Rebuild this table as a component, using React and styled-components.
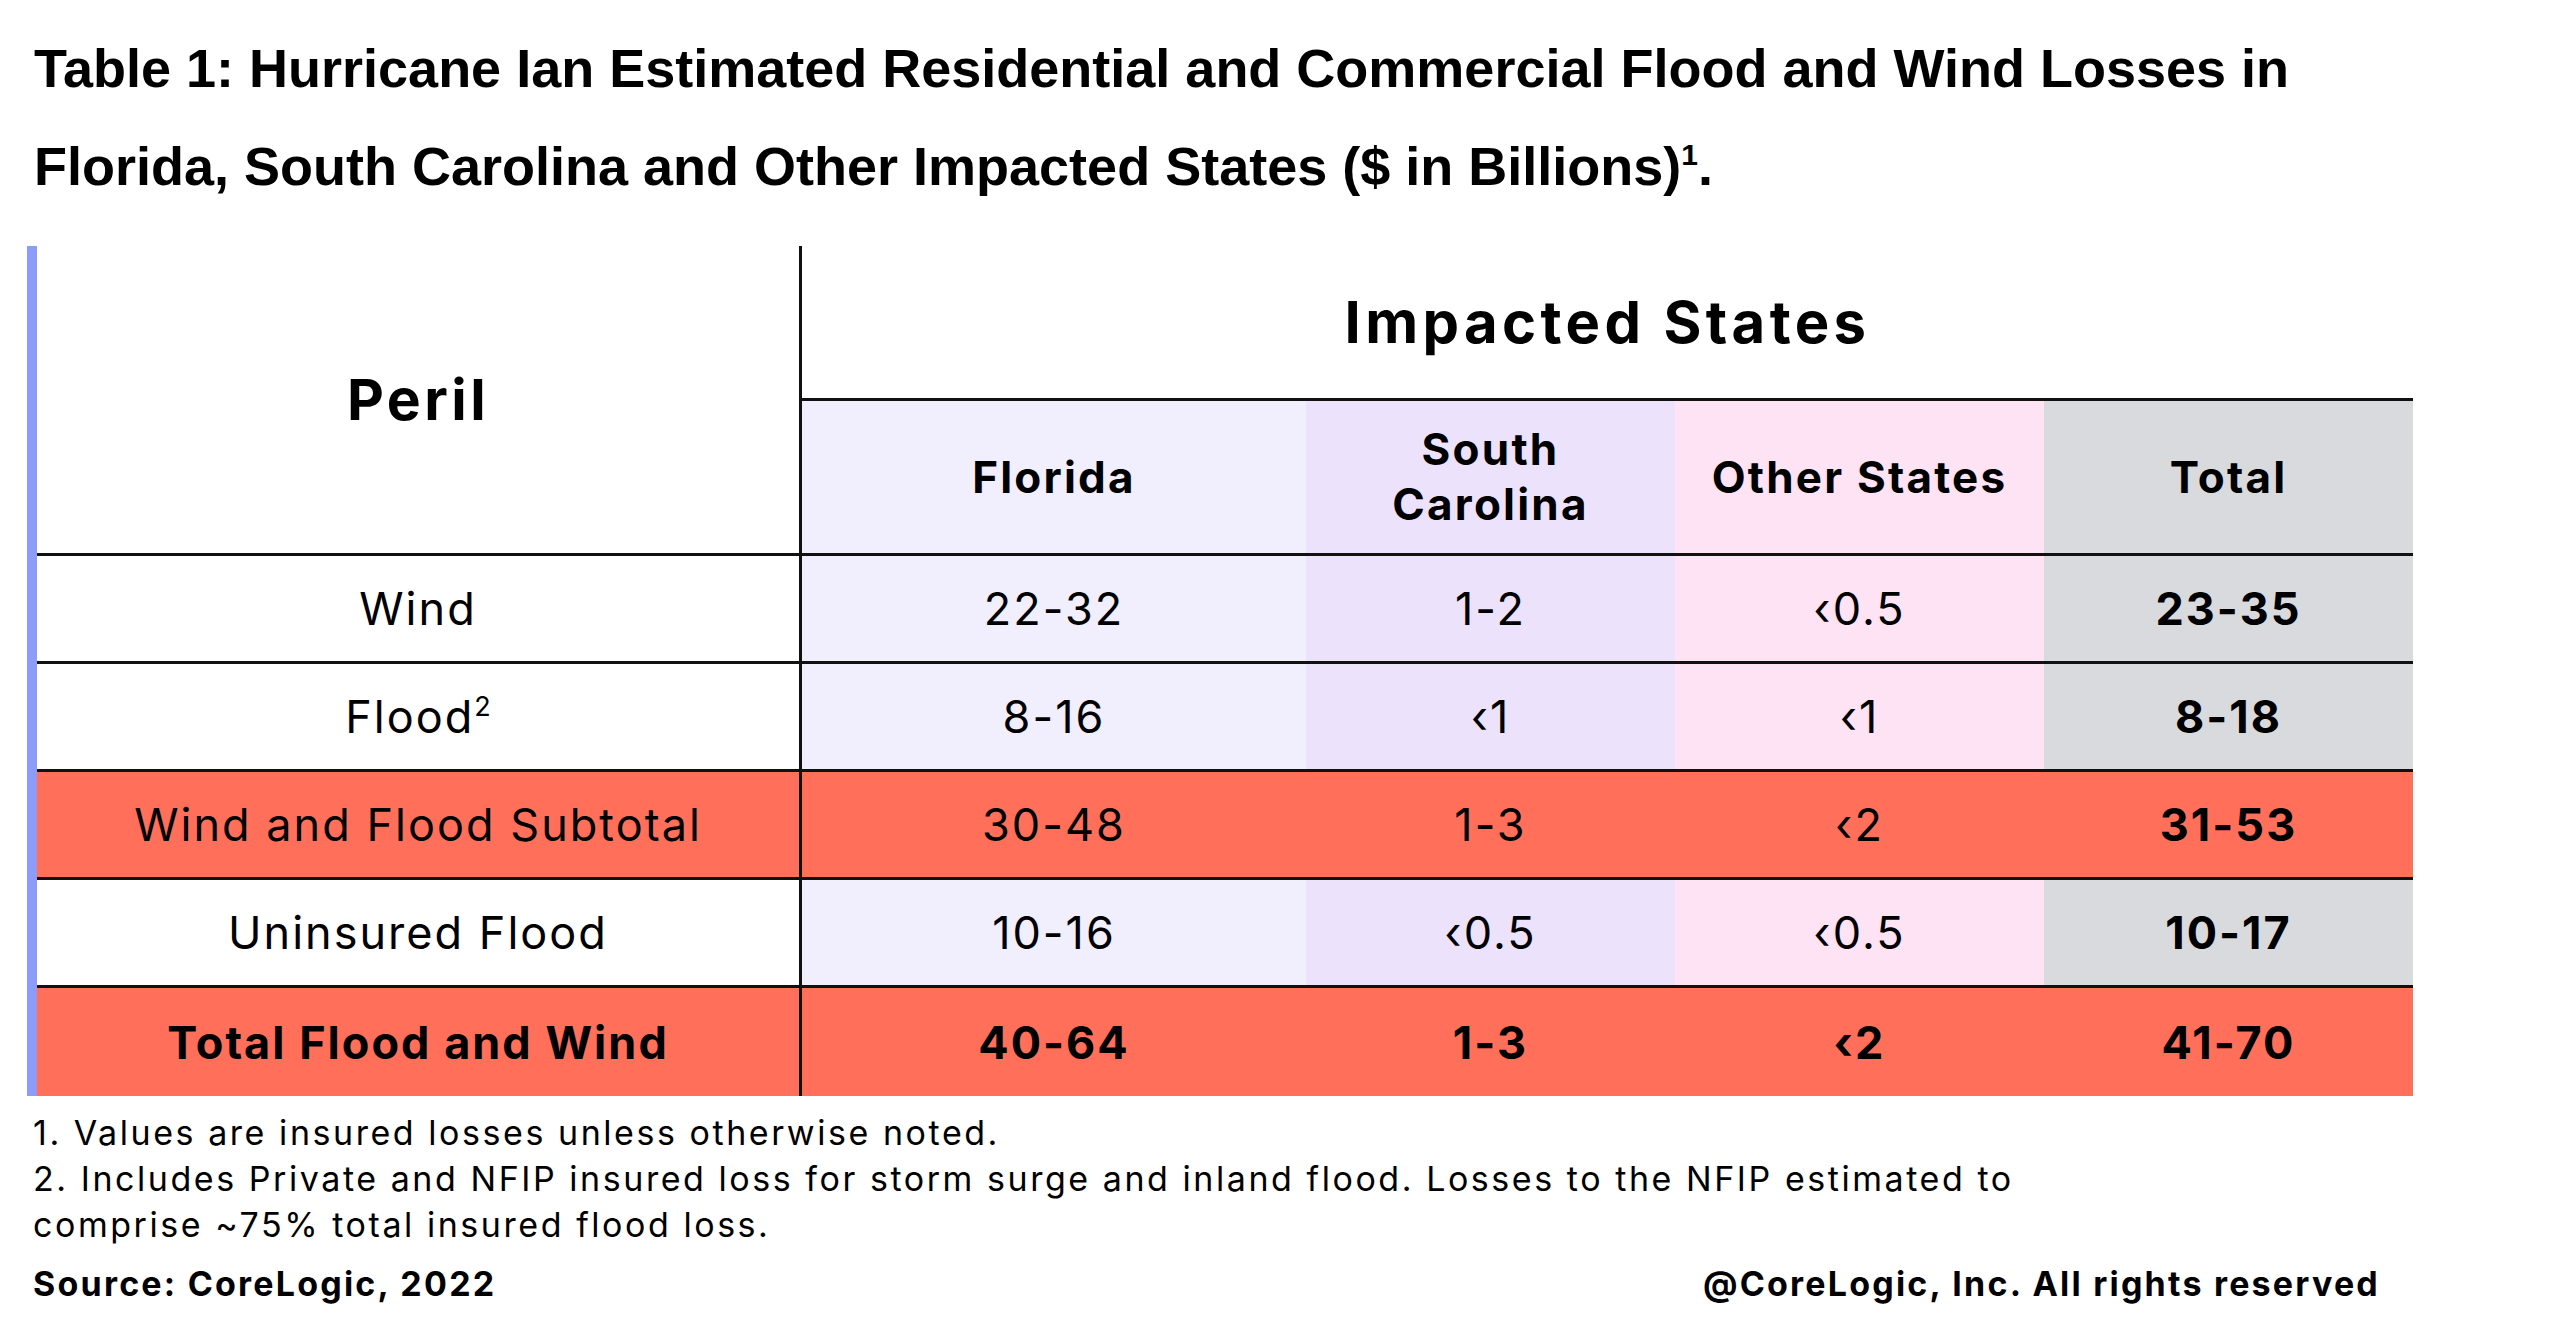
import styled, { createGlobalStyle } from "styled-components";

const GlobalStyle = createGlobalStyle`
  body {
    margin: 0;
    background: #fff;
    color: #000;
  }
`;

const Page = styled.div`
  padding: 19px 0 0 27px;
  font-family: Inter, "Noto Sans", sans-serif;
`;

const Title = styled.h1`
  margin: 0 0 31px 7px;
  font-family: "Liberation Sans", Arial, sans-serif;
  font-weight: 700;
  font-size: 54px;
  line-height: 98px;

  sup {
    font-size: 30px;
    line-height: 0;
    vertical-align: 20px;
  }
`;

const Grid = styled.div`
  display: grid;
  grid-template-columns: 765px 504px 369px 369px 369px;
  grid-template-rows: 155px 155px repeat(5, 108px);
  width: 2376px;
  border-left: 10px solid #8c9cfa;
`;

const Cell = styled.div`
  display: flex;
  align-items: center;
  justify-content: center;
  text-align: center;
  box-sizing: border-box;
  background: ${(p) => p.$bg || "#fff"};
  border-bottom: ${(p) => (p.$last ? "none" : "3px solid #111")};
  border-right: ${(p) => (p.$divider ? "3px solid #111" : "none")};
  font-size: 45px;
  letter-spacing: 0.045em;
  font-weight: ${(p) => (p.$bold ? 700 : 400)};
  line-height: 55px;

  sup {
    font-size: 27px;
    line-height: 0;
    letter-spacing: 0;
    vertical-align: 17px;
  }
`;

const ColHead = styled(Cell)`
  font-size: 44px;
  letter-spacing: 0.05em;
  font-weight: 700;
`;

const PerilHead = styled(Cell)`
  grid-row: span 2;
  font-size: 57px;
  letter-spacing: 0.06em;
  font-weight: 700;
`;

const GroupHead = styled(Cell)`
  grid-column: span 4;
  font-size: 58px;
  letter-spacing: 0.075em;
  font-weight: 700;
`;

const Text = styled.span`
  display: block;
`;

const Notes = styled.div`
  margin: 14px 0 0 6px;
  font-size: 34px;
  letter-spacing: 0.075em;
  line-height: 46px;
`;

const SourceRow = styled.div`
  display: flex;
  justify-content: space-between;
  width: 2347px;
  margin: 13px 0 0 6px;
  font-size: 34px;
  letter-spacing: 0.065em;
  line-height: 46px;
  font-weight: 700;
`;

const HOT = "#ff6f59";
const colBg = ["#f1effe", "#ece2fc", "#fde3f4", "#d9dade"];

const columns = ["Florida", <>South<br />Carolina</>, "Other States", "Total"];

const rows = [
  { label: "Wind", values: ["22-32", "1-2", "‹0.5", "23-35"] },
  { label: <>Flood<sup>2</sup></>, values: ["8-16", "‹1", "‹1", "8-18"] },
  { label: "Wind and Flood Subtotal", values: ["30-48", "1-3", "‹2", "31-53"], hot: true },
  { label: "Uninsured Flood", values: ["10-16", "‹0.5", "‹0.5", "10-17"] },
  { label: "Total Flood and Wind", values: ["40-64", "1-3", "‹2", "41-70"], hot: true, strong: true },
];

export default function App() {
  return (
    <Page>
      <GlobalStyle />
      <Title>
        Table 1: Hurricane Ian Estimated Residential and Commercial Flood and Wind Losses in
        <br />
        Florida, South Carolina and Other Impacted States ($ in Billions)<sup>1</sup>.
      </Title>

      <Grid>
        <PerilHead $divider>
          <Text>Peril</Text>
        </PerilHead>
        <GroupHead>
          <Text>Impacted States</Text>
        </GroupHead>
        {columns.map((c, i) => (
          <ColHead key={i} $bg={colBg[i]}>
            <Text>{c}</Text>
          </ColHead>
        ))}

        {rows.map((r, ri) => {
          const last = ri === rows.length - 1;
          return [
            <Cell key={`l${ri}`} $divider $last={last} $bg={r.hot ? HOT : "#fff"} $bold={r.strong}>
              <Text>{r.label}</Text>
            </Cell>,
            ...r.values.map((v, vi) => (
              <Cell
                key={`v${ri}-${vi}`}
                $last={last}
                $bg={r.hot ? HOT : colBg[vi]}
                $bold={r.strong || vi === 3}
              >
                <Text>{v}</Text>
              </Cell>
            )),
          ];
        })}
      </Grid>

      <Notes>
        1. Values are insured losses unless otherwise noted.
        <br />
        2. Includes Private and NFIP insured loss for storm surge and inland flood. Losses to the NFIP estimated to
        <br />
        comprise ~75% total insured flood loss.
      </Notes>
      <SourceRow>
        <span>Source: CoreLogic, 2022</span>
        <span>@CoreLogic, Inc. All rights reserved</span>
      </SourceRow>
    </Page>
  );
}
